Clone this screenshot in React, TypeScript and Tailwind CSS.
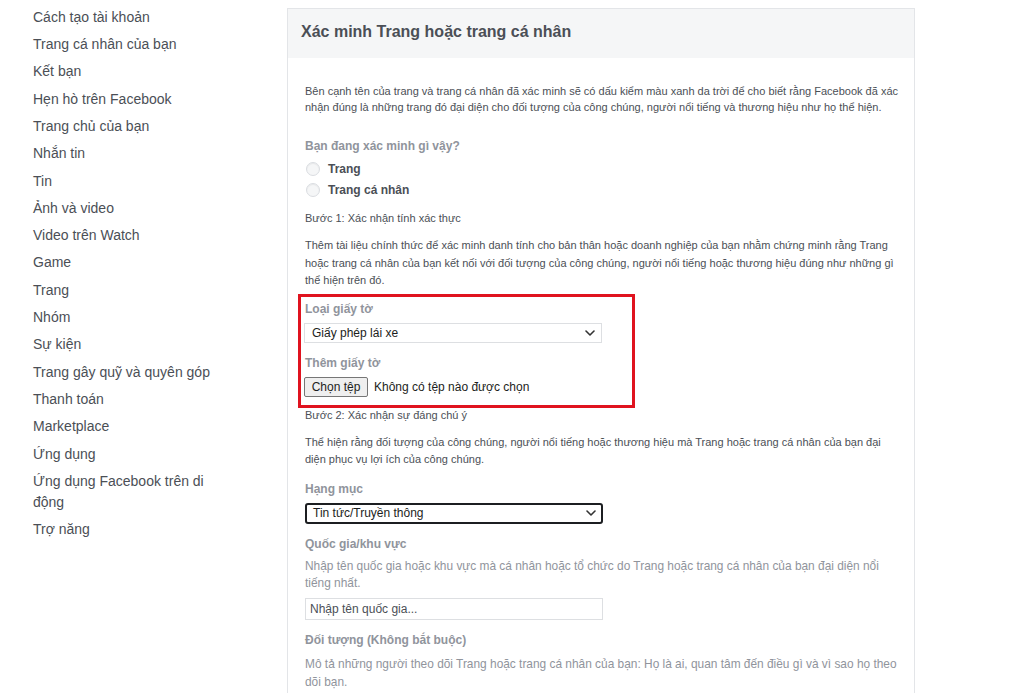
import React from 'react';

const MENU = [
  'Cách tạo tài khoản',
  'Trang cá nhân của bạn',
  'Kết bạn',
  'Hẹn hò trên Facebook',
  'Trang chủ của bạn',
  'Nhắn tin',
  'Tin',
  'Ảnh và video',
  'Video trên Watch',
  'Game',
  'Trang',
  'Nhóm',
  'Sự kiện',
  'Trang gây quỹ và quyên góp',
  'Thanh toán',
  'Marketplace',
  'Ứng dụng',
  'Ứng dụng Facebook trên di động',
  'Trợ năng',
];

const Chevron = () => (
  <svg width="10" height="6" viewBox="0 0 10 6" fill="none">
    <path d="M1 1l4 4 4-4" stroke="#333" strokeWidth="1.6" strokeLinecap="round" strokeLinejoin="round" />
  </svg>
);

const Radio = ({ label }: { label: string }) => (
  <div className="flex h-[21px] items-center gap-[8px] pl-[1px]">
    <span className="h-[14px] w-[14px] rounded-full border border-[#dadde1] bg-[#f5f6f7] shadow-[inset_0_1px_1px_rgba(0,0,0,0.06)]" />
    <span className="text-[12px] font-bold text-[#4b4f56]">{label}</span>
  </div>
);

export default function App() {
  return (
    <div className="flex min-h-[693px] bg-white font-['Liberation_Sans',Arial,sans-serif]">
      {/* Left help menu */}
      <aside className="w-[287px] shrink-0 pl-[33px] pt-[3.5px]">
        <ul className="w-[180px]">
          {MENU.map((item) => (
            <li key={item} className="py-[3.3px] text-[14px] leading-[20.7px] text-[#4b4f56]">
              {item}
            </li>
          ))}
        </ul>
      </aside>

      {/* Verification panel */}
      <main className="mt-[8px] w-[628px] shrink-0 self-start border border-[#e3e5e8] border-b-0">
        <div className="flex h-[49px] items-center bg-[#f5f6f7] px-[13px] pb-[4px]">
          <h1 className="text-[16px] font-bold text-[#4b4f56]">Xác minh Trang hoặc trang cá nhân</h1>
        </div>

        <div className="pb-[8px] pl-[17px] pr-[12px] pt-[25px] text-[12px] text-[#4b4f56]">
          <p className="text-[11px] leading-[16px]">
            Bên cạnh tên của trang và trang cá nhân đã xác minh sẽ có dấu kiểm màu xanh da trời để cho biết rằng Facebook đã xác
            nhận đúng là những trang đó đại diện cho đối tượng của công chúng, người nổi tiếng và thương hiệu như họ thể hiện.
          </p>

          <p className="mt-[23px] font-bold leading-[16px] text-[#90949c]">Bạn đang xác minh gì vậy?</p>
          <div className="mt-[4px]">
            <Radio label="Trang" />
            <Radio label="Trang cá nhân" />
          </div>

          <p className="mt-[10px] text-[11px] leading-[16px]">Bước 1: Xác nhận tính xác thực</p>
          <p className="mt-[11px] text-[11px] leading-[17.5px]">
            Thêm tài liệu chính thức để xác minh danh tính cho bản thân hoặc doanh nghiệp của bạn nhằm chứng minh rằng Trang
            hoặc trang cá nhân của bạn kết nối với đối tượng của công chúng, người nổi tiếng hoặc thương hiệu đúng như những gì
            thể hiện trên đó.
          </p>

          {/* highlighted document block */}
          <div className="-ml-[7px] mt-[4px] w-[337px] border-[3px] border-[#e0131f] pb-[8px] pl-[3px] pt-[4px]">
            <p className="pl-[1px] font-bold leading-[16px] text-[#90949c]">Loại giấy tờ</p>
            <div className="mt-[6px] flex h-[20px] w-[298px] items-center justify-between border border-[#dddfe2] bg-white pl-[7px] pr-[6px] text-[12px] text-[#1c1e21]">
              <span>Giấy phép lái xe</span>
              <Chevron />
            </div>
            <p className="mt-[12px] pl-[1px] font-bold leading-[16px] text-[#90949c]">Thêm giấy tờ</p>
            <div className="mt-[6px] flex items-center gap-[6px] text-[12px] text-[#1c1e21]">
              <span className="flex h-[20px] w-[64px] items-center justify-center rounded-[2px] border border-[#767676] bg-[#efefef]">
                Chọn tệp
              </span>
              <span>Không có tệp nào được chọn</span>
            </div>
          </div>

          <p className="text-[11px] leading-[14px]">Bước 2: Xác nhận sự đáng chú ý</p>
          <p className="mt-[12px] text-[11px] leading-[17px]">
            Thể hiện rằng đối tượng của công chúng, người nổi tiếng hoặc thương hiệu mà Trang hoặc trang cá nhân của bạn đại
            diện phục vụ lợi ích của công chúng.
          </p>

          <p className="mt-[13px] font-bold leading-[16px] text-[#90949c]">Hạng mục</p>
          <div className="mt-[6px] flex h-[21px] w-[298px] items-center justify-between rounded-[3px] border-2 border-[#1c1e21] bg-white pl-[6px] pr-[5px] text-[12px] text-[#1c1e21]">
            <span>Tin tức/Truyền thông</span>
            <Chevron />
          </div>

          <p className="mt-[12px] font-bold leading-[16px] text-[#90949c]">Quốc gia/khu vực</p>
          <p className="mt-[6px] text-[11.9px] leading-[17px] text-[#90949c]">
            Nhập tên quốc gia hoặc khu vực mà cá nhân hoặc tổ chức do Trang hoặc trang cá nhân của bạn đại diện nổi
            tiếng nhất.
          </p>
          <div className="mt-[6px] flex h-[22px] w-[298px] items-center border border-[#dddfe2] bg-white pl-[4px] text-[12px] text-[#4b4f56]">
            Nhập tên quốc gia...
          </div>

          <p className="mt-[12px] font-bold leading-[16px] text-[#90949c]">Đối tượng (Không bắt buộc)</p>
          <p className="mt-[7px] text-[11.9px] leading-[18px] text-[#90949c]">
            Mô tả những người theo dõi Trang hoặc trang cá nhân của bạn: Họ là ai, quan tâm đến điều gì và vì sao họ theo
            dõi bạn.
          </p>
        </div>
      </main>
    </div>
  );
}
